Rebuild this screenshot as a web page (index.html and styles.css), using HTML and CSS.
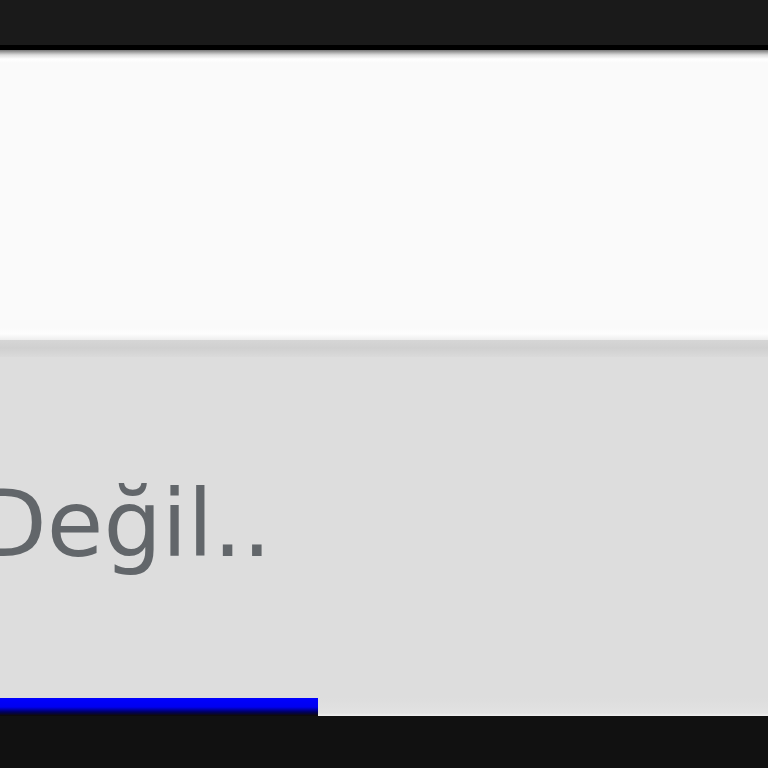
FILE: index.html
```html
<!DOCTYPE html>
<html lang="tr">
<head>
<meta charset="utf-8">
<link rel="stylesheet" href="styles.css">
</head>
<body>
<div class="top"></div>
<div class="panel"></div>
<div class="strip"></div>
<div class="content">
  <div class="label">Değil..</div>
</div>
<div class="progress"><div class="bar"></div></div>
<div class="bottom"></div>
</body>
</html>
```
FILE: styles.css
```css
html, body {
  margin: 0;
  padding: 0;
  width: 768px;
  height: 768px;
  overflow: hidden;
  background: #111111;
}
.top {
  height: 45px;
  background: #1a1a1a;
  border-bottom: 5px solid #000;
}
.panel {
  height: 290px;
  background: linear-gradient(#777 0, #ddd 5px, #fff 9px, #fafafa 13px, #fafafa 278px, #fdfdfd 284px, #eeeeee 290px);
}
.strip {
  height: 17px;
  background: linear-gradient(#d6d6d6 0, #d0d0d0 8px, #dadada 17px);
}
.content {
  height: 341px;
  background: #dddddd;
  overflow: hidden;
  display: flex;
  align-items: flex-start;
}
.label {
  margin-top: 122px;
  margin-left: -24px;
  font-family: "DejaVu Sans", sans-serif;
  font-size: 92px;
  line-height: 1;
  color: #62666a;
  white-space: nowrap;
}
.progress {
  height: 18px;
  background: linear-gradient(#dddddd 0, #e2e2e2 15px, #f0f0f0 18px);
  display: flex;
}
.bar {
  width: 318px;
  height: 100%;
  background: linear-gradient(#0000ff 0, #0000f0 9px, #000060 14px, #100c00 18px);
}
.bottom {
  height: 58px;
  background: #111111;
}
```
